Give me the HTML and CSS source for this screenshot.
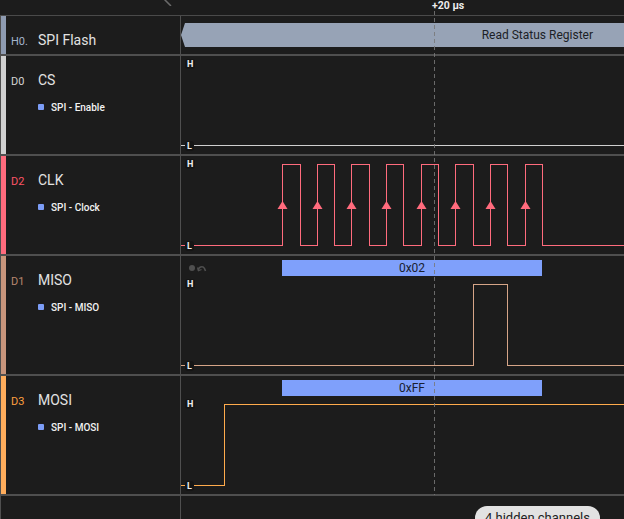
FILE: index.html
```html
<!DOCTYPE html>
<html>
<head>
<meta charset="utf-8">
<link rel="stylesheet" href="styles.css">
</head>
<body>
<div class="app">
  <div class="header"></div>

  <div class="row r38">
    <div class="label">
      <div class="chip c-h0"></div>
      <div class="meta">
        <div class="title"><span class="id id-h0">H0.</span><span class="name">SPI Flash</span></div>
      </div>
    </div>
    <div class="wave">
      <div class="frame"><span>Read Status Register</span></div>
    </div>
  </div>

  <div class="row r98">
    <div class="label">
      <div class="chip c-d0"></div>
      <div class="meta">
        <div class="title"><span class="id id-d0">D0</span><span class="name">CS</span></div>
        <div class="sub"><span class="sq"></span><span>SPI - Enable</span></div>
      </div>
    </div>
    <div class="wave">
      <svg class="sig" width="443" height="98" viewBox="0 0 443 98">
        <polyline points="0,89.5 443,89.5" stroke="#cfcfcf"/>
      </svg>
      <span class="lv hi-a">H</span>
      <span class="lv lo-a">L</span>
    </div>
  </div>

  <div class="row r98">
    <div class="label">
      <div class="chip c-d2"></div>
      <div class="meta">
        <div class="title"><span class="id id-d2">D2</span><span class="name">CLK</span></div>
        <div class="sub"><span class="sq"></span><span>SPI - Clock</span></div>
      </div>
    </div>
    <div class="wave">
      <svg class="sig" width="443" height="98" viewBox="0 0 443 98">
        <polyline stroke="#ff6b7d" points="0,89.5 101.5,89.5 101.5,8.5 119.5,8.5 119.5,89.5 136.5,89.5 136.5,8.5 153.5,8.5 153.5,89.5 170.5,89.5 170.5,8.5 188.5,8.5 188.5,89.5 205.5,89.5 205.5,8.5 222.5,8.5 222.5,89.5 240.5,89.5 240.5,8.5 257.5,8.5 257.5,89.5 274.5,89.5 274.5,8.5 292.5,8.5 292.5,89.5 309.5,89.5 309.5,8.5 326.5,8.5 326.5,89.5 344.5,89.5 344.5,8.5 361.5,8.5 361.5,89.5 443,89.5"/>
        <g fill="#ff6b7d">
          <polygon points="96.5,53 101.5,45 106.5,53"/>
          <polygon points="131.5,53 136.5,45 141.5,53"/>
          <polygon points="165.5,53 170.5,45 175.5,53"/>
          <polygon points="200.5,53 205.5,45 210.5,53"/>
          <polygon points="235.5,53 240.5,45 245.5,53"/>
          <polygon points="269.5,53 274.5,45 279.5,53"/>
          <polygon points="304.5,53 309.5,45 314.5,53"/>
          <polygon points="339.5,53 344.5,45 349.5,53"/>
        </g>
      </svg>
      <span class="lv hi-a">H</span>
      <span class="lv lo-a">L</span>
    </div>
  </div>

  <div class="row r118">
    <div class="label">
      <div class="chip c-d1"></div>
      <div class="meta">
        <div class="title"><span class="id id-d1">D1</span><span class="name">MISO</span></div>
        <div class="sub"><span class="sq"></span><span>SPI - MISO</span></div>
      </div>
    </div>
    <div class="wave">
      <svg class="sig" width="443" height="118" viewBox="0 0 443 118">
        <polyline stroke="#d6a588" points="0,109.5 292.5,109.5 292.5,28.5 326.5,28.5 326.5,109.5 443,109.5"/>
        <g class="tool" fill="none" stroke="#505050" stroke-width="1.6">
          <circle cx="11" cy="12" r="3" fill="#505050" stroke="none"/>
          <path d="M17.5 14.5 A3.2 3.2 0 0 1 23.5 12.5 L24.5 15"/>
          <path d="M16.5 11.5 L17.5 14.8 L20.5 13.5" stroke-width="1.2"/>
        </g>
      </svg>
      <div class="bus">0x02</div>
      <span class="lv hi-b">H</span>
      <span class="lv lo-b">L</span>
    </div>
  </div>

  <div class="row r118">
    <div class="label">
      <div class="chip c-d3"></div>
      <div class="meta">
        <div class="title"><span class="id id-d3">D3</span><span class="name">MOSI</span></div>
        <div class="sub"><span class="sq"></span><span>SPI - MOSI</span></div>
      </div>
    </div>
    <div class="wave">
      <svg class="sig" width="443" height="118" viewBox="0 0 443 118">
        <polyline stroke="#ffab4c" points="0,109.5 43.5,109.5 43.5,28.5 443,28.5"/>
      </svg>
      <div class="bus">0xFF</div>
      <span class="lv hi-b">H</span>
      <span class="lv lo-b">L</span>
    </div>
  </div>

  <div class="footer">
    <div class="foot-label"></div>
    <div class="foot-wave"><span class="pill">4 hidden channels</span></div>
  </div>

  <svg class="chev" width="12" height="12" viewBox="0 0 12 12"><polyline points="9,0 3,6 9,12" fill="none" stroke="#6a6a6a" stroke-width="1.5"/></svg>
  <span class="time">+20 µs</span>
  <div class="cursor"></div>
</div>
</body>
</html>
```

FILE: styles.css
```css
* { box-sizing: border-box; margin: 0; padding: 0; }
html, body { background: #1c1c1c; }
body {
  width: 624px;
  height: 519px;
  overflow: hidden;
  font-family: Roboto, "Liberation Sans", sans-serif;
}
.app { position: relative; width: 624px; height: 519px; overflow: hidden; }

.header { height: 16px; border-bottom: 1px solid #4a4a4a; }

.row { display: flex; border-bottom: 2px solid #4f4f4f; }
.r38 { height: 40px; }
.r98 { height: 100px; }
.r118 { height: 120px; }

.label {
  width: 181px;
  flex: none;
  display: flex;
  border-left: 1px solid #4f4f4f;
  border-right: 1px solid #4f4f4f;
}
.chip { width: 5px; flex: none; }
.c-h0 { background: #8e9bb1; }
.c-d0 { background: #d0d0d0; }
.c-d2 { background: #ff6b7d; }
.c-d1 { background: #c8957c; }
.c-d3 { background: #ffad5c; }

.meta { padding: 16px 0 0 5px; }
.title { display: flex; align-items: baseline; }
.id { width: 27px; font-size: 11px; line-height: 16px; }
.id-h0 { color: #a4b4cc; }
.id-d0 { color: #d4d4d4; }
.id-d2 { color: #ff5466; }
.id-d1 { color: #b8876e; }
.id-d3 { color: #ffa040; }
.name { font-size: 14px; line-height: 16px; color: #e2e2e2; }

.sub {
  display: flex;
  align-items: center;
  gap: 7px;
  margin: 11px 0 0 27px;
  height: 12px;
  font-size: 10px;
  font-weight: 500;
  color: #f2f2f2;
}
.sq { width: 6px; height: 6px; border-radius: 1px; background: #7c9df7; }

.wave { position: relative; flex: 1; overflow: hidden; }
.sig { display: block; }
.sig polyline { fill: none; stroke-width: 1; shape-rendering: crispEdges; }

.frame {
  position: absolute;
  left: 0;
  top: 7px;
  width: 443px;
  height: 24px;
  background: #97a3b6;
  clip-path: polygon(4px 0, 100% 0, 100% 100%, 4px 100%, 0 50%);
  display: flex;
  align-items: center;
  justify-content: flex-end;
  padding-right: 31px;
  font-size: 12px;
  color: #1c1f26;
}

.bus {
  position: absolute;
  left: 101px;
  top: 4px;
  width: 260px;
  height: 16px;
  background: #7fa0fb;
  color: #1a2030;
  font-size: 12px;
  line-height: 16px;
  text-align: center;
}

.lv {
  position: absolute;
  left: 4px;
  padding: 0 2px;
  height: 10px;
  line-height: 10px;
  font-size: 9px;
  font-weight: 700;
  color: #eeeeee;
  background: #151515;
  border-radius: 3px;
}
.hi-a { top: 3px; }
.lo-a { top: 85px; }
.hi-b { top: 23px; }
.lo-b { top: 105px; }

.footer { display: flex; height: 23px; }
.foot-label {
  width: 181px;
  flex: none;
  border-left: 1px solid #4f4f4f;
  border-right: 1px solid #4f4f4f;
}
.foot-wave { flex: 1; padding: 10px 0 0 294px; }
.pill {
  display: inline-block;
  height: 24px;
  padding: 0 10px;
  border-radius: 12px;
  background: #e2e2e2;
  color: #222222;
  font-size: 13px;
  line-height: 24px;
  white-space: nowrap;
}

.chev { position: absolute; left: 162px; top: -6px; }
.time {
  position: absolute;
  left: 432px;
  top: 0;
  font-size: 10.5px;
  line-height: 11px;
  font-weight: 700;
  color: #ececec;
}
.cursor {
  position: absolute;
  left: 434px;
  top: 11px;
  width: 1px;
  height: 484px;
  background: repeating-linear-gradient(to bottom, rgba(120,120,120,0.85) 0 4px, transparent 4px 7px);
}
```
